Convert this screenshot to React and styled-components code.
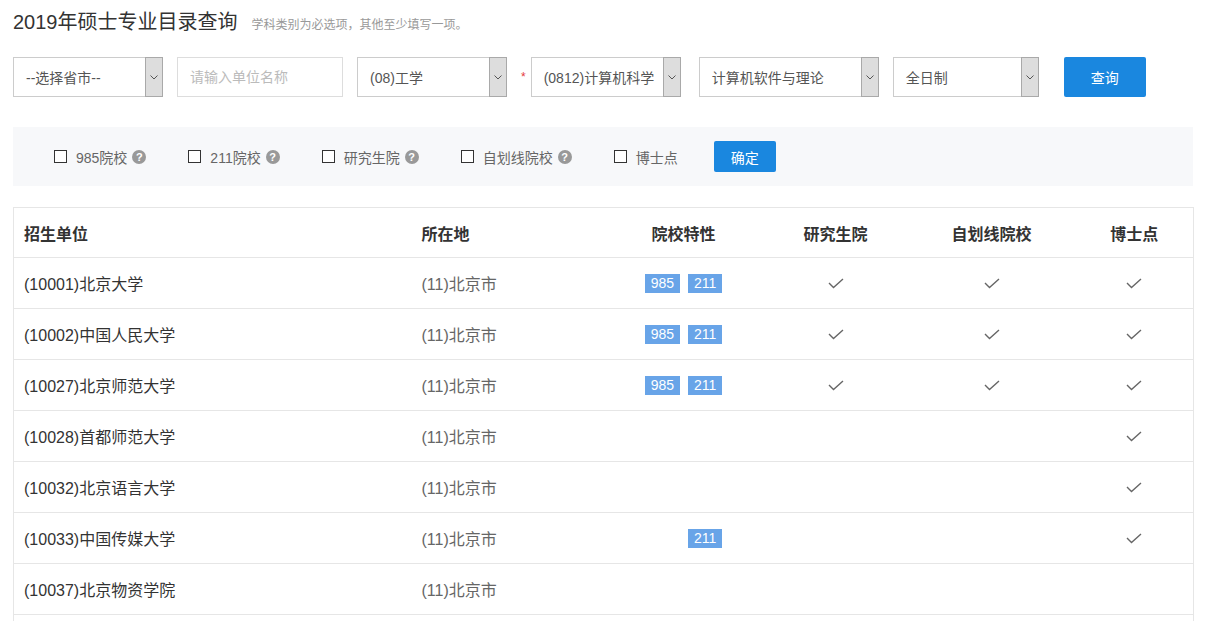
import React from 'react'
import styled, { createGlobalStyle } from 'styled-components'

const GlobalStyle = createGlobalStyle`
    html, body {
        margin: 0;
        padding: 0;
        background: #fff;
    }
    body {
        font-family: 'Liberation Sans', 'Noto Sans CJK SC', sans-serif;
        color: #333;
    }
`

const Page = styled('div')({
    width: '1180px',
    padding: '8px 12px 0 13px',
})

const TitleRow = styled('div')({
    display: 'flex',
    alignItems: 'baseline',
    height: '28px',
    lineHeight: '28px',
})

const Title = styled('h1')({
    margin: 0,
    fontSize: '20px',
    fontWeight: 'normal',
    color: '#333',
})

const Hint = styled('span')({
    marginLeft: '14px',
    fontSize: '12px',
    color: '#999',
})

const FormRow = styled('div')({
    display: 'flex',
    alignItems: 'center',
    height: '40px',
    marginTop: '21px',
})

const SelectBox = styled('div')({
    display: 'flex',
    alignItems: 'stretch',
    boxSizing: 'border-box',
    height: '40px',
    width: (props) => props.$width + 'px',
    marginLeft: (props) => (props.$offset || 0) + 'px',
    border: '1px solid #ccc',
    background: '#fff',
    fontSize: '14px',
    color: '#555',
})

const SelectText = styled('div')({
    flex: 1,
    display: 'flex',
    alignItems: 'center',
    paddingLeft: '12px',
    whiteSpace: 'nowrap',
    overflow: 'hidden',
})

const ArrowBox = styled('div')({
    width: '16px',
    display: 'flex',
    alignItems: 'center',
    justifyContent: 'center',
    background: '#dddddd',
    border: '1px solid #a9a9a9',
    margin: '-1px -1px -1px 0',
})

const TextInput = styled('input')({
    boxSizing: 'border-box',
    height: '40px',
    width: '166px',
    marginLeft: '14px',
    border: '1px solid #ddd',
    padding: '0 12px',
    fontSize: '14px',
    fontFamily: 'inherit',
    outline: 'none',
    '&::placeholder': {
        color: '#bbb',
    },
})

const Star = styled('span')({
    color: '#e4393c',
    fontSize: '12px',
    margin: '0 5px 0 14px',
})

const PrimaryButton = styled('button')({
    boxSizing: 'border-box',
    width: (props) => props.$width + 'px',
    height: (props) => props.$height + 'px',
    marginLeft: (props) => (props.$offset || 0) + 'px',
    border: 0,
    borderRadius: '2px',
    background: '#1a87df',
    color: '#fff',
    fontSize: '14px',
    fontFamily: 'inherit',
    cursor: 'pointer',
})

const FilterPanel = styled('div')({
    display: 'flex',
    alignItems: 'center',
    height: '59px',
    marginTop: '30px',
    paddingLeft: '41px',
    background: '#f7f8fa',
})

const FilterItem = styled('label')({
    display: 'flex',
    alignItems: 'center',
    marginRight: (props) => (props.$last ? '36px' : '42px'),
    fontSize: '14px',
    color: '#666',
})

const Checkbox = styled('span')({
    boxSizing: 'border-box',
    width: '13px',
    height: '13px',
    border: '1px solid #333',
    background: '#fff',
    marginRight: '9px',
})

const Help = styled('span')({
    display: 'inline-flex',
    alignItems: 'center',
    justifyContent: 'center',
    width: '14px',
    height: '14px',
    marginLeft: '5px',
    borderRadius: '50%',
    background: '#999',
    color: '#fff',
    fontSize: '11px',
    fontWeight: 'bold',
})

const Table = styled('table')({
    width: '100%',
    marginTop: '21px',
    borderCollapse: 'collapse',
    border: '1px solid #e6e6e6',
    tableLayout: 'fixed',
})

const Th = styled('th')({
    height: '49px',
    padding: '0 10px',
    textAlign: (props) => props.$align || 'left',
    fontSize: '16px',
    fontWeight: 'bold',
    color: '#333',
    borderBottom: '1px solid #e6e6e6',
})

const Td = styled('td')({
    height: '50px',
    padding: '0 10px',
    textAlign: (props) => props.$align || 'left',
    fontSize: '16px',
    color: (props) => (props.$muted ? '#666' : '#333'),
    borderBottom: '1px solid #e6e6e6',
    whiteSpace: 'nowrap',
})

const Badges = styled('div')({
    display: 'flex',
    justifyContent: 'center',
    gap: '8px',
})

const Badge = styled('span')({
    height: '19px',
    lineHeight: '19px',
    padding: '0 6px',
    background: '#68a4e8',
    color: '#fff',
    fontSize: '14px',
    visibility: (props) => (props.$off ? 'hidden' : 'visible'),
})

function Chevron() {
    return (
        <svg width="8" height="5" viewBox="0 0 8 5">
            <polyline points="0.5,0.5 4,4 7.5,0.5" fill="none" stroke="#555" strokeWidth="1" />
        </svg>
    )
}

function Check() {
    return (
        <svg width="16" height="11" viewBox="0 0 16 11" style={{ display: 'inline-block', verticalAlign: 'middle' }}>
            <polyline points="1,5 5.5,9.5 15,1" fill="none" stroke="#666" strokeWidth="1.4" />
        </svg>
    )
}

function Select({ width, offset, children }) {
    return (
        <SelectBox $width={width} $offset={offset}>
            <SelectText>{children}</SelectText>
            <ArrowBox>
                <Chevron />
            </ArrowBox>
        </SelectBox>
    )
}

const Filters = [
    { label: '985院校', help: true },
    { label: '211院校', help: true },
    { label: '研究生院', help: true },
    { label: '自划线院校', help: true },
    { label: '博士点', help: false },
]

const Schools = [
    ['(10001)北京大学', ['985', '211'], true, true, true],
    ['(10002)中国人民大学', ['985', '211'], true, true, true],
    ['(10027)北京师范大学', ['985', '211'], true, true, true],
    ['(10028)首都师范大学', [], false, false, true],
    ['(10032)北京语言大学', [], false, false, true],
    ['(10033)中国传媒大学', ['211'], false, false, true],
    ['(10037)北京物资学院', [], false, false, false],
    ['(10038)首都经济贸易大学', [], false, false, false],
]

export default function App() {
    return (
        <Page>
            <GlobalStyle />
            <TitleRow>
                <Title>2019年硕士专业目录查询</Title>
                <Hint>学科类别为必选项，其他至少填写一项。</Hint>
            </TitleRow>
            <FormRow>
                <Select width={150}>--选择省市--</Select>
                <TextInput placeholder="请输入单位名称" />
                <Select width={150} offset={14}>(08)工学</Select>
                <Star>*</Star>
                <Select width={150}>(0812)计算机科学</Select>
                <Select width={180} offset={18}>计算机软件与理论</Select>
                <Select width={146} offset={14}>全日制</Select>
                <PrimaryButton $width={82} $height={40} $offset={25}>查询</PrimaryButton>
            </FormRow>
            <FilterPanel>
                {Filters.map((f, i) => (
                    <FilterItem key={f.label} $last={i === Filters.length - 1}>
                        <Checkbox />
                        {f.label}
                        {f.help && <Help>?</Help>}
                    </FilterItem>
                ))}
                <PrimaryButton $width={62} $height={31}>确定</PrimaryButton>
            </FilterPanel>
            <Table>
                <colgroup>
                    <col style={{ width: '398px' }} />
                    <col style={{ width: '192px' }} />
                    <col style={{ width: '160px' }} />
                    <col style={{ width: '144px' }} />
                    <col style={{ width: '168px' }} />
                    <col style={{ width: '118px' }} />
                </colgroup>
                <thead>
                    <tr>
                        <Th>招生单位</Th>
                        <Th>所在地</Th>
                        <Th $align="center">院校特性</Th>
                        <Th $align="center">研究生院</Th>
                        <Th $align="center">自划线院校</Th>
                        <Th $align="center">博士点</Th>
                    </tr>
                </thead>
                <tbody>
                    {Schools.map(([name, tags, grad, self, phd]) => (
                        <tr key={name}>
                            <Td>{name}</Td>
                            <Td $muted>(11)北京市</Td>
                            <Td $align="center">
                                {tags.length > 0 && (
                                    <Badges>
                                        <Badge $off={!tags.includes('985')}>985</Badge>
                                        <Badge $off={!tags.includes('211')}>211</Badge>
                                    </Badges>
                                )}
                            </Td>
                            <Td $align="center">{grad && <Check />}</Td>
                            <Td $align="center">{self && <Check />}</Td>
                            <Td $align="center">{phd && <Check />}</Td>
                        </tr>
                    ))}
                </tbody>
            </Table>
        </Page>
    )
}
